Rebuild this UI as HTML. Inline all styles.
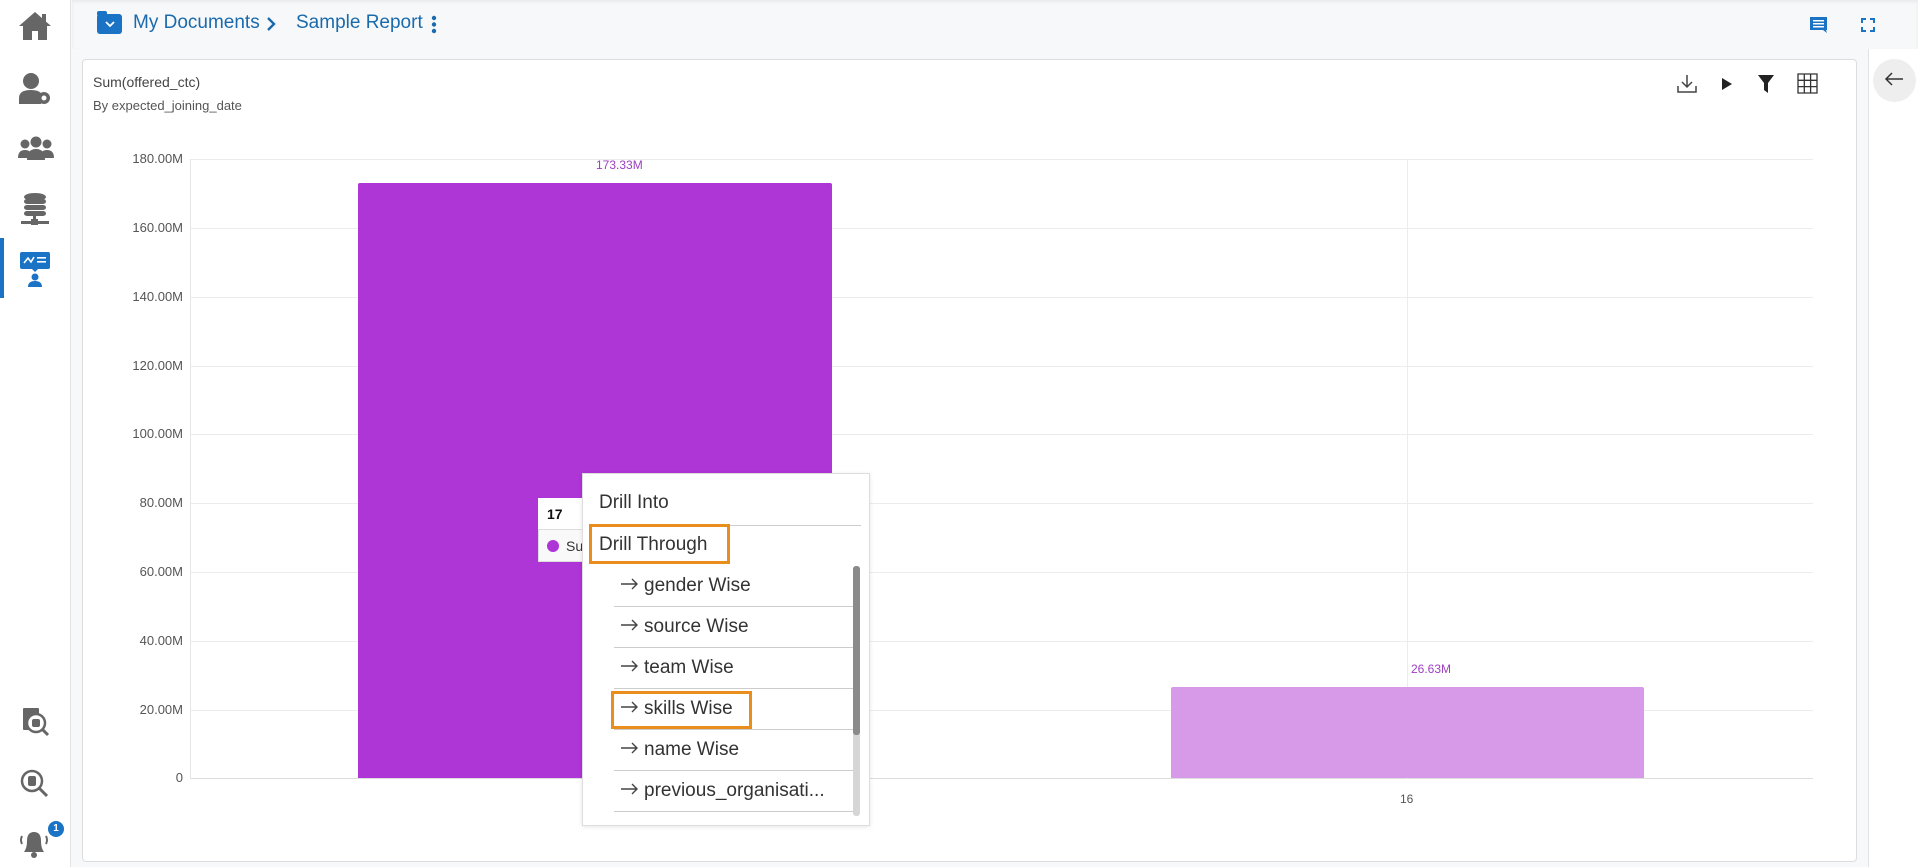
<!DOCTYPE html>
<html><head><meta charset="utf-8"><style>
*{box-sizing:border-box;margin:0;padding:0}
body{width:1918px;height:867px;overflow:hidden;background:#f7f8f9;font-family:"Liberation Sans",sans-serif;position:relative}
.abs{position:absolute}
.side{left:0;top:0;width:71px;height:867px;background:#fff;border-right:1px solid #e3e3e3}
.top{left:72px;top:0;right:0;height:49px;background:#f7f8f9;box-shadow:0 2px 3px rgba(0,0,0,.06) inset}
.card{left:82px;top:59px;width:1775px;height:803px;background:#fff;border:1px solid #ddd;border-radius:4px}
.rp{left:1868px;top:49px;width:50px;height:818px;background:#fff;border-left:1px solid #e3e3e3}
.yl{position:absolute;right:1735px;font-size:13px;color:#555;text-align:right}
.gl{position:absolute;left:190px;width:1623px;height:1px;background:#ececec}
.menu{left:582px;top:473px;width:288px;height:353px;background:#fff;border:1px solid #ddd;box-shadow:0 1px 4px rgba(0,0,0,.1)}
.it{position:absolute;left:31px;width:240px;height:41px;border-bottom:1px solid #ccc;font-size:19px;color:#333;padding-left:30px;line-height:40px}
.it svg{position:absolute;left:7px;top:12px}
</style></head><body>
<div class="abs side"></div>
<div class="abs" style="left:0;top:238px;width:4px;height:60px;background:#1a73c4"></div>
<svg class="abs" style="left:17px;top:10px" width="36" height="32" viewBox="0 0 36 32"><path d="M18 2 L2 16 H6 V30 H15 V21 H21 V30 H30 V16 H34 Z" fill="#666"/><rect x="25" y="4" width="4" height="8" fill="#666"/></svg>
<svg class="abs" style="left:18px;top:72px" width="34" height="34"><circle cx="13" cy="9" r="8" fill="#666"/><path d="M1 32 V26 Q1 18 13 18 Q20 18 23 21 L23 32 Z" fill="#666"/><circle cx="26" cy="26" r="6" fill="#666"/><circle cx="26" cy="26" r="2.5" fill="#fff"/></svg>
<svg class="abs" style="left:18px;top:136px" width="36" height="26"><circle cx="18" cy="6" r="5.5" fill="#666"/><circle cx="7" cy="8" r="4.5" fill="#666"/><circle cx="29" cy="8" r="4.5" fill="#666"/><path d="M0 22 Q0 14 7 14 Q14 14 14 22Z M22 22 Q22 14 29 14 Q36 14 36 22Z M9 24 Q9 13 18 13 Q27 13 27 24Z" fill="#666"/></svg>
<svg class="abs" style="left:20px;top:192px" width="30" height="36"><ellipse cx="15" cy="5" rx="11" ry="4" fill="#666"/><rect x="4" y="7" width="22" height="5" rx="3" fill="#666"/><rect x="4" y="13" width="22" height="5" rx="3" fill="#666"/><rect x="4" y="19" width="22" height="5" rx="3" fill="#666"/><rect x="13" y="24" width="3" height="6" fill="#666"/><rect x="1" y="29" width="28" height="3" fill="#666"/><rect x="11" y="27" width="7" height="6" fill="#666"/></svg>
<svg class="abs" style="left:20px;top:252px" width="30" height="36"><rect x="0" y="0" width="30" height="17" rx="2" fill="#1a73c4"/><path d="M4 11 L8 6 L11 10 L14 5" stroke="#fff" stroke-width="1.6" fill="none"/><rect x="17" y="5" width="9" height="1.6" fill="#fff"/><rect x="17" y="9" width="9" height="1.6" fill="#fff"/><path d="M12 17 L15 20 L18 17Z" fill="#1a73c4"/><circle cx="15" cy="25" r="3.5" fill="#1a73c4"/><path d="M8 35 Q8 29 15 29 Q22 29 22 35Z" fill="#1a73c4"/></svg>
<svg class="abs" style="left:20px;top:706px" width="30" height="32"><rect x="3" y="2" width="16" height="22" rx="1" fill="#666"/><circle cx="16" cy="17" r="9" fill="#fff" stroke="#666" stroke-width="2.5"/><rect x="12" y="13" width="8" height="8" rx="2" fill="#666"/><path d="M22 23 L28 29" stroke="#666" stroke-width="3"/></svg>
<svg class="abs" style="left:19px;top:768px" width="32" height="32"><circle cx="13" cy="13" r="10" fill="none" stroke="#666" stroke-width="2.5"/><rect x="9" y="8" width="8" height="10" rx="2" fill="#666"/><path d="M20 20 L28 28" stroke="#666" stroke-width="3"/></svg>
<svg class="abs" style="left:18px;top:826px" width="32" height="32"><path d="M6 26 Q9 22 9 15 Q9 6 16 6 Q23 6 23 15 Q23 22 26 26Z" fill="#666"/><circle cx="16" cy="29" r="3" fill="#666"/><path d="M4 10 Q2 14 4 18 M28 10 Q30 14 28 18" stroke="#666" stroke-width="2" fill="none"/></svg>
<div class="abs" style="left:48px;top:821px;width:16px;height:16px;border-radius:50%;background:#1a73c4;color:#fff;font-size:10px;font-weight:bold;text-align:center;line-height:16px">1</div>

<div class="abs top"></div>
<div class="abs" style="left:97px;top:14px;width:25px;height:20px;background:#1a73c4;border-radius:3px"></div>
<div class="abs" style="left:97px;top:11px;width:10px;height:5px;background:#1a73c4;border-radius:2px"></div>
<svg class="abs" style="left:104px;top:19px" width="12" height="10"><path d="M2 3 L6 7 L10 3" stroke="#fff" stroke-width="1.8" fill="none"/></svg>
<div class="abs" style="left:133px;top:12px;font-size:19px;color:#1a6aac">My Documents</div>
<svg class="abs" style="left:265px;top:16px" width="12" height="16"><path d="M3 2 L9 8 L3 14" stroke="#1a6aac" stroke-width="2.4" fill="none"/></svg>
<div class="abs" style="left:296px;top:12px;font-size:19px;color:#1a6aac">Sample Report</div>
<svg class="abs" style="left:431px;top:15px" width="6" height="20"><circle cx="3" cy="3" r="2.2" fill="#1a6aac"/><circle cx="3" cy="9.5" r="2.2" fill="#1a6aac"/><circle cx="3" cy="16" r="2.2" fill="#1a6aac"/></svg>
<svg class="abs" style="left:1809px;top:16px" width="20" height="18"><path d="M1 1 H18 V14 H17 L18 17 L14 14 H1Z" fill="#1a73c4"/><rect x="4" y="4" width="11" height="1.5" fill="#fff"/><rect x="4" y="7" width="11" height="1.5" fill="#fff"/><rect x="4" y="10" width="11" height="1.5" fill="#fff"/></svg>
<svg class="abs" style="left:1861px;top:18px" width="14" height="14"><path d="M1 5 V1 H5 M9 1 H13 V5 M13 9 V13 H9 M5 13 H1 V9" stroke="#1a73c4" stroke-width="2" fill="none"/></svg>

<div class="abs card"></div>
<div class="abs rp"></div>
<div class="abs" style="left:1873px;top:59px;width:43px;height:43px;border-radius:50%;background:#eee"></div>
<svg class="abs" style="left:1884px;top:72px" width="20" height="14"><path d="M19 7 H2 M8 1 L2 7 L8 13" stroke="#333" stroke-width="1.5" fill="none"/></svg>

<div class="abs" style="left:93px;top:74px;font-size:14px;color:#444">Sum(offered_ctc)</div>
<div class="abs" style="left:93px;top:98px;font-size:13px;color:#555">By expected_joining_date</div>
<svg class="abs" style="left:1676px;top:74px" width="22" height="20"><path d="M11 1 V13 M6 8 L11 13 L16 8 M2 12 V18 H20 V12" stroke="#444" stroke-width="1.5" fill="none"/></svg>
<svg class="abs" style="left:1721px;top:77px" width="12" height="14"><path d="M1 1 L11 7 L1 13Z" fill="#222"/></svg>
<svg class="abs" style="left:1757px;top:74px" width="18" height="20"><path d="M1 1 H17 L11 9 V19 L7 16 V9Z" fill="#222"/></svg>
<svg class="abs" style="left:1797px;top:73px" width="21" height="21"><path d="M1 1 H20 V20 H1Z M7.3 1 V20 M13.6 1 V20 M1 7.3 H20 M1 13.6 H20" stroke="#333" stroke-width="1.3" fill="none"/></svg>

<div class="gl" style="top:159px"></div><div class="gl" style="top:228px"></div><div class="gl" style="top:297px"></div><div class="gl" style="top:366px"></div><div class="gl" style="top:434px"></div><div class="gl" style="top:503px"></div><div class="gl" style="top:572px"></div><div class="gl" style="top:641px"></div><div class="gl" style="top:710px"></div><div class="gl" style="top:778px;background:#ddd"></div>
<div class="abs" style="left:190px;top:159px;width:1px;height:620px;background:#e6e6e6"></div>
<div class="abs" style="left:1407px;top:159px;width:1px;height:620px;background:#ececec"></div>
<div class="yl" style="top:151px">180.00M</div><div class="yl" style="top:220px">160.00M</div><div class="yl" style="top:289px">140.00M</div><div class="yl" style="top:358px">120.00M</div><div class="yl" style="top:426px">100.00M</div><div class="yl" style="top:495px">80.00M</div><div class="yl" style="top:564px">60.00M</div><div class="yl" style="top:633px">40.00M</div><div class="yl" style="top:702px">20.00M</div><div class="yl" style="top:770px">0</div>
<div class="abs" style="left:358px;top:183px;width:474px;height:595px;background:#ae35d6;border-radius:2px 2px 0 0"></div>
<div class="abs" style="left:1171px;top:687px;width:473px;height:91px;background:#d69ae8;border-radius:2px 2px 0 0"></div>
<div class="abs" style="left:596px;top:158px;font-size:12px;color:#9d3fc0">173.33M</div>
<div class="abs" style="left:1411px;top:662px;font-size:12px;color:#9d3fc0">26.63M</div>
<div class="abs" style="left:1400px;top:792px;font-size:12px;color:#555">16</div>

<div class="abs" style="left:538px;top:498px;width:50px;height:64px;background:#f9f9f9;border:1px solid #ddd"></div>
<div class="abs" style="left:538px;top:498px;width:50px;height:32px;background:#fff;border-bottom:1px solid #ddd"></div>
<div class="abs" style="left:547px;top:506px;font-size:14px;font-weight:bold;color:#111">17</div>
<div class="abs" style="left:547px;top:540px;width:12px;height:12px;border-radius:50%;background:#ae35d6"></div>
<div class="abs" style="left:566px;top:538px;font-size:14px;color:#333">Su</div>

<div class="abs menu">
<div class="abs" style="left:16px;top:18px;font-size:19px;color:#333">Drill Into</div>
<div class="abs" style="left:16px;top:51px;width:262px;height:1px;background:#ccc"></div>
<div class="abs" style="left:6px;top:50px;width:141px;height:40px;border:3px solid #e98d1c"></div>
<div class="abs" style="left:16px;top:60px;font-size:19px;color:#333">Drill Through</div>
<div class="it" style="top:92px"><svg width="18" height="12"><path d="M0 6 H16 M11 1 L16 6 L11 11" stroke="#444" stroke-width="1.4" fill="none"/></svg>gender Wise</div>
<div class="it" style="top:133px"><svg width="18" height="12"><path d="M0 6 H16 M11 1 L16 6 L11 11" stroke="#444" stroke-width="1.4" fill="none"/></svg>source Wise</div>
<div class="it" style="top:174px"><svg width="18" height="12"><path d="M0 6 H16 M11 1 L16 6 L11 11" stroke="#444" stroke-width="1.4" fill="none"/></svg>team Wise</div>
<div class="it" style="top:215px"><svg width="18" height="12"><path d="M0 6 H16 M11 1 L16 6 L11 11" stroke="#444" stroke-width="1.4" fill="none"/></svg>skills Wise</div>
<div class="it" style="top:256px"><svg width="18" height="12"><path d="M0 6 H16 M11 1 L16 6 L11 11" stroke="#444" stroke-width="1.4" fill="none"/></svg>name Wise</div>
<div class="it" style="top:297px"><svg width="18" height="12"><path d="M0 6 H16 M11 1 L16 6 L11 11" stroke="#444" stroke-width="1.4" fill="none"/></svg>previous_organisati...</div>
<div class="abs" style="left:28px;top:217px;width:141px;height:38px;border:3px solid #e98d1c"></div>
<div class="abs" style="left:270px;top:92px;width:7px;height:250px;background:#d6d6d6;border-radius:3px"></div>
<div class="abs" style="left:270px;top:92px;width:7px;height:169px;background:#8a8a8a;border-radius:3px"></div>
</div>
</body></html>
